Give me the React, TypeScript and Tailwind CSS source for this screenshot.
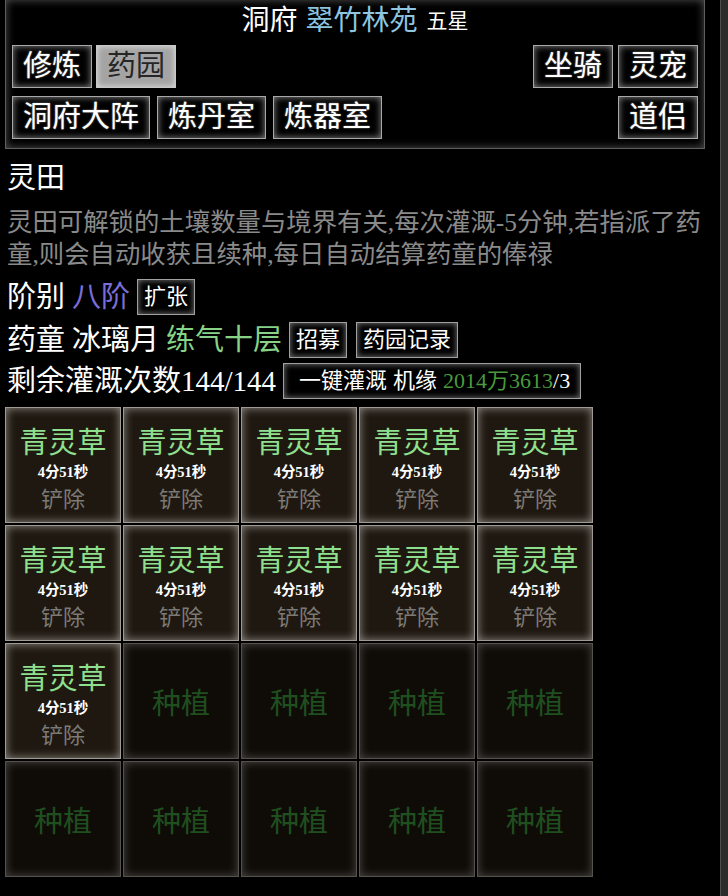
import React from "react";

const FONT = { fontFamily: '"Liberation Serif", "Noto Sans CJK SC", serif' };

function BigBtn({ label, active }: { label: string; active?: boolean }) {
  return (
    <div
      className={
        "h-[43px] px-[10px] flex items-center border text-[29px] leading-none " +
        (active
          ? "bg-[#a4a4a4] border-[#c8c8c8] text-[#262626] shadow-[inset_0_0_6px_rgba(255,255,255,0.7)]"
          : "bg-black border-[#a8a8a8] text-white shadow-[inset_0_0_7px_rgba(255,255,255,0.55)] [text-shadow:0_0_2px_rgba(255,255,255,0.5)]")
      }
    >
      {label}
    </div>
  );
}

function SmallBtn({ children, className = "" }: { children: React.ReactNode; className?: string }) {
  return (
    <div
      className={
        "h-[36px] px-[6px] flex items-center border border-[#a0a0a0] bg-black text-white text-[22px] leading-none shadow-[inset_0_0_6px_rgba(255,255,255,0.5)] " +
        className
      }
    >
      {children}
    </div>
  );
}

function FilledCell() {
  return (
    <div className="w-[116px] h-[116px] border border-[#a09a90] bg-[#1f1810] shadow-[inset_0_0_10px_rgba(255,255,255,0.5)] flex flex-col items-center pt-[20px]">
      <div className="text-[29px] leading-[30px] text-[#8ee08e]">青灵草</div>
      <div className="text-[14.5px] leading-[28px] text-white font-bold">4分51秒</div>
      <div className="text-[22px] leading-[28px] text-[#7c7a76]">铲除</div>
    </div>
  );
}

function EmptyCell() {
  return (
    <div className="w-[116px] h-[116px] border border-[#55514b] bg-[#0f0c08] shadow-[inset_0_0_10px_rgba(255,255,255,0.25)] flex items-center justify-center pt-[7px]">
      <div className="text-[29px] leading-none text-[#1f4f1f]">种植</div>
    </div>
  );
}

export default function App() {
  const cells = Array.from({ length: 20 }, (_, i) => i < 11);
  return (
    <div className="min-h-screen bg-black flex" style={FONT}>
      <div className="w-[720px]">
        {/* header panel */}
        <div className="ml-[5px] w-[700px] border-x border-b border-[#5e5e5e] shadow-[inset_0_0_8px_rgba(140,140,140,0.6)] px-[6px] pb-[9px]">
          <div className="h-[42px] flex items-center justify-center text-white text-[28px] leading-none">
            <span>洞府</span>
            <span className="ml-[8px] text-[#8ec6e0]">翠竹林苑</span>
            <span className="ml-[9px] text-[21px]">五星</span>
          </div>
          <div className="mt-[3px] flex justify-between">
            <div className="flex gap-[4px]">
              <BigBtn label="修炼" />
              <BigBtn label="药园" active />
            </div>
            <div className="flex gap-[5px]">
              <BigBtn label="坐骑" />
              <BigBtn label="灵宠" />
            </div>
          </div>
          <div className="mt-[8px] flex justify-between">
            <div className="flex gap-[7px]">
              <BigBtn label="洞府大阵" />
              <BigBtn label="炼丹室" />
              <BigBtn label="炼器室" />
            </div>
            <div className="flex">
              <BigBtn label="道侣" />
            </div>
          </div>
        </div>

        {/* 灵田 */}
        <div className="px-[7px]">
          <div className="mt-[10px] text-[29px] leading-[38px] text-white">灵田</div>
          <div className="mt-[9px] text-[25.4px] leading-[32px] text-[#8a8a8a] whitespace-nowrap">
            灵田可解锁的土壤数量与境界有关,每次灌溉-5分钟,若指派了药
            <br />
            童,则会自动收获且续种,每日自动结算药童的俸禄
          </div>

          <div className="mt-[9px] h-[36px] flex items-center text-[29px] leading-none text-white">
            <span>阶别</span>
            <span className="ml-[7px] text-[#7a6ed6]">八阶</span>
            <SmallBtn className="ml-[7px]">扩张</SmallBtn>
          </div>

          <div className="mt-[7px] h-[36px] flex items-center text-[29px] leading-none text-white">
            <span>药童</span>
            <span className="ml-[7px]">冰璃月</span>
            <span className="ml-[7px] text-[#86d286]">练气十层</span>
            <SmallBtn className="ml-[7px]">招募</SmallBtn>
            <SmallBtn className="ml-[9px]">药园记录</SmallBtn>
          </div>

          <div className="mt-[5px] h-[36px] flex items-center text-[29px] leading-none text-white">
            <span>剩余灌溉次数144/144</span>
            <SmallBtn className="ml-[7px] pl-[15px] pr-[10px]">
              <span>一键灌溉</span>
              <span className="ml-[6px]">机缘</span>
              <span className="ml-[6px] text-[#4a9a3c]">2014万3613</span>
              <span>/3</span>
            </SmallBtn>
          </div>
        </div>

        {/* grid */}
        <div className="mt-[7px] ml-[5px] grid grid-cols-[repeat(5,116px)] gap-[2px] pt-px">
          {cells.map((filled, i) => (filled ? <FilledCell key={i} /> : <EmptyCell key={i} />))}
        </div>
      </div>
      <div className="w-[8px] bg-[#2b2b2b] border-l border-[#4e4e4e]" />
    </div>
  );
}
